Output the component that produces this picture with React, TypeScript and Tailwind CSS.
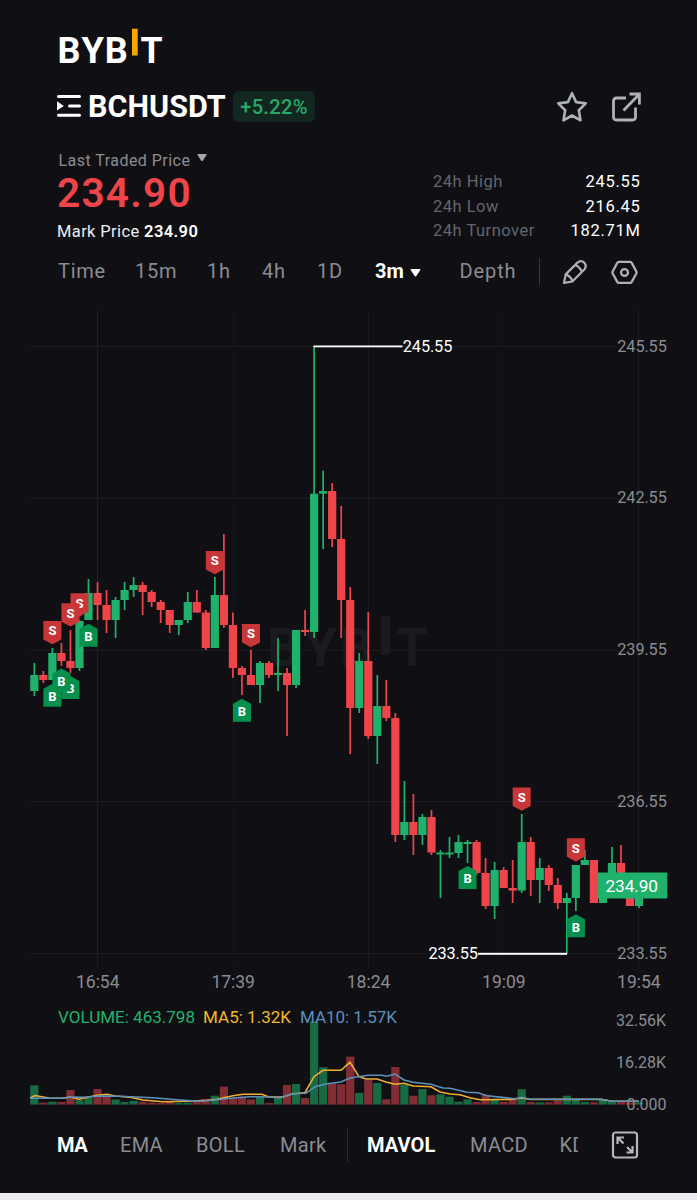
import React from 'react';

type Candle = [high: number, top: number, bottom: number, low: number, up: 0 | 1, volume: number];

// high, body top, body bottom, low, direction, top of the volume bar
const candles: Candle[] = [
  [663, 675, 691, 696, 1, 1085.3],
  [671, 675, 680, 683, 0, 1102.6],
  [648, 653, 680, 680, 1, 1101.7],
  [643, 653, 661, 666, 0, 1102],
  [630, 661, 668, 673, 0, 1090],
  [620, 621, 668, 671, 1, 1100],
  [579, 593, 620, 620, 1, 1098],
  [582, 593, 605, 620, 0, 1089],
  [590, 605, 620, 633, 0, 1097],
  [597, 600, 620, 638, 1, 1099.5],
  [582, 590, 600, 610, 1, 1102],
  [577, 585, 590, 597, 1, 1100.7],
  [582, 585, 592, 615, 0, 1101.7],
  [590, 592, 602, 607, 0, 1102.6],
  [600, 602, 610, 623, 0, 1103],
  [610, 610, 625, 633, 0, 1101.7],
  [620, 620, 625, 635, 1, 1103],
  [592, 602, 620, 623, 1, 1102.6],
  [590, 602, 612.5, 612.5, 0, 1102],
  [610, 612.5, 648, 650, 0, 1099],
  [577, 595, 648, 648, 1, 1095.7],
  [534, 595, 625, 628, 0, 1086.7],
  [612.5, 625, 668, 678, 0, 1098.3],
  [666, 668, 675, 695, 0, 1096.7],
  [650, 675, 685, 685, 0, 1099.5],
  [661, 663, 685, 703, 1, 1096.7],
  [661, 663, 675, 678, 0, 1103],
  [638, 673, 675, 691, 1, 1097.3],
  [668, 673, 685, 736, 0, 1085],
  [630, 630, 685, 688, 1, 1084],
  [610, 630, 632, 636, 0, 1098],
  [346, 493.7, 632, 638, 1, 1021.3],
  [470.7, 491, 493.7, 549, 1, 1067.3],
  [483, 491, 539, 547, 0, 1083.3],
  [506, 539, 600, 638, 0, 1084.3],
  [587, 600, 708, 754, 0, 1056.7],
  [653, 661, 708, 713, 1, 1093],
  [612, 661, 736, 739, 0, 1080],
  [675, 706, 736, 764, 1, 1083],
  [680, 706, 718, 721, 0, 1099.3],
  [713, 718, 835, 842, 0, 1067],
  [781, 822, 835, 840, 1, 1084.7],
  [794, 822, 835, 855, 0, 1095.7],
  [814, 817, 835, 845, 1, 1089],
  [810, 817, 852.5, 855, 0, 1095.3],
  [850, 852.5, 854.5, 898, 1, 1094.3],
  [837, 852.5, 854.5, 858, 1, 1096.7],
  [835, 842, 853, 858, 1, 1101.7],
  [840, 842, 844, 863, 1, 1099.3],
  [840, 842, 873, 875, 0, 1102],
  [858, 873, 906, 909, 0, 1094.7],
  [862, 870, 906, 919, 1, 1099.3],
  [867, 870, 888, 888, 0, 1101.7],
  [860, 888, 890.5, 903, 0, 1099.3],
  [814, 842, 890.5, 893, 1, 1089.3],
  [837, 842, 880, 896, 0, 1102],
  [858, 868, 880, 903, 1, 1102.3],
  [865, 868, 885, 891, 0, 1102.3],
  [878, 885, 903, 909, 0, 1100.3],
  [893, 898, 903, 954, 1, 1095.7],
  [865, 865, 898, 911, 1, 1099.7],
  [850, 860, 865, 865, 1, 1102],
  [860, 860, 903, 903, 0, 1102.3],
  [880, 885, 903, 903, 1, 1099.3],
  [847, 863, 885, 890, 1, 1102],
  [845, 863, 885, 890, 0, 1101],
  [880, 885, 906, 906, 0, 1102.6],
  [885, 898, 906, 908, 1, 1102.3],
];

// candle index, y of the flat edge
const sells = [[60, 838.3], [54, 787.4], [24, 624], [20, 551], [5, 593.2], [4, 603.2], [2, 621]];
const buys = [[60, 937.3], [48, 889], [23, 721.7], [6, 646.7], [4, 699], [3, 691.5], [2, 706.7]];

const priceAxis: [string, number][] = [
  ['245.55', 346.5],
  ['242.55', 498.3],
  ['239.55', 650.2],
  ['236.55', 801.7],
  ['233.55', 953.7],
];
const timeAxis: [string, number, string][] = [
  ['16:54', 97.5, '#1f2025'],
  ['17:39', 232.9, '#15161a'],
  ['18:24', 368.3, '#1f2025'],
  ['19:09', 503.6, '#15161a'],
  ['19:54', 638.6, '#1f2025'],
];

const ma5 =
  '30,1098 35,1095.5 50,1098.3 62,1098.3 70,1097 79,1099.3 97,1095.3 107,1094.3 115,1096 130,1097.3 143,1100 163,1101.7 187,1101.3 207,1100.3 217,1099.3 233,1095.7 243,1094.3 262,1094.3 268,1096.7 283,1097 293,1093.7 305,1092.7 314,1076.7 323,1070.3 341,1070.3 350,1062.3 359,1076.7 366,1079 377,1079 386,1082 395,1084.3 404,1083.3 413,1086 431,1086.7 440,1092 450,1094 460,1094.7 470,1097.7 480,1099.7 513,1099.3 522,1098 530,1099.4 601,1099.4 612,1101.3 639,1101.3';
const ma10 =
  '30,1098.3 63,1098.3 73,1097 83,1097.3 100,1096 120,1096.3 153,1097.7 180,1100 200,1101.3 217,1099.7 230,1098.3 250,1096.7 267,1097 280,1097.7 293,1093.7 306,1093.3 315,1086.7 327,1083.7 341,1082 350,1078 368,1075.3 382,1075.3 387,1076.3 395,1074 404,1080 413,1082.3 431,1084.3 443,1088 450,1088.3 467,1092.3 478,1092.7 487,1095.7 515,1098.7 522,1097.3 530,1099.3 601,1099.3 612,1101.3 639,1101.3';

const cx = (i: number) => 34.35 + i * 9.025;

function Logo() {
  return (
    <svg width="118" height="56" viewBox="52 22 118 56" className="-ml-[5px] block font-['Roboto'] font-bold">
      <g fill="#fff" fontSize="37.5">
        <text x="57.5" y="63.3" textLength="23" lengthAdjust="spacingAndGlyphs">B</text>
        <text x="81.5" y="63.3" textLength="22.5" lengthAdjust="spacingAndGlyphs">Y</text>
        <text x="104.8" y="63.3" textLength="23" lengthAdjust="spacingAndGlyphs">B</text>
        <text x="140.5" y="63.3" textLength="22" lengthAdjust="spacingAndGlyphs">T</text>
      </g>
      <rect x="132" y="28.7" width="5.7" height="26.8" fill="#f7a600" />
    </svg>
  );
}

function Chart() {
  return (
    <svg width="697" height="820" viewBox="0 300 697 820" className="block font-['Roboto']">
      <g strokeWidth="1">
        {priceAxis.map(([label, y]) => (
          <line key={label} x1="29" x2="617" y1={y} y2={y} stroke="#1d1e23" />
        ))}
        {timeAxis.map(([label, x, color]) => (
          <line key={label} x1={x} x2={x} y1="310" y2="967" stroke={color} />
        ))}
      </g>

      {/* Watermark */}
      <g fill="#1a1b1f" fontSize="53" fontWeight="700">
        <text x="267" y="666" textLength="33" lengthAdjust="spacingAndGlyphs">B</text>
        <text x="304" y="666" textLength="33" lengthAdjust="spacingAndGlyphs">Y</text>
        <text x="340" y="666" textLength="33" lengthAdjust="spacingAndGlyphs">B</text>
        <text x="396" y="666" textLength="32" lengthAdjust="spacingAndGlyphs">T</text>
        <rect x="381" y="616.5" width="9" height="38" />
      </g>

      {/* Volume */}
      {candles.map(([, , , , up, volume], i) => (
        <rect
          key={i}
          x={cx(i) - 4.1}
          y={volume}
          width="8.2"
          height={1104.6 - volume}
          fill={up ? '#186a43' : '#822d34'}
        />
      ))}
      <g fontSize="17">
        <text x="58" y="1022.7" fill="#20b26c" textLength="137">VOLUME: 463.798</text>
        <text x="203" y="1022.7" fill="#f5b72c" textLength="88">MA5: 1.32K</text>
        <text x="300" y="1022.7" fill="#5b8fbe" textLength="97">MA10: 1.57K</text>
      </g>
      <polyline points={ma5} fill="none" stroke="#f0ae33" strokeWidth="1.6" />
      <polyline points={ma10} fill="none" stroke="#5d90bb" strokeWidth="1.6" />

      {/* Candles */}
      {candles.map(([high, top, bottom, low, up], i) => (
        <g key={i} fill={up ? '#20b26c' : '#ef454a'}>
          <rect x={cx(i) - 0.85} y={high} width="1.7" height={low - high} />
          <rect x={cx(i) - 4.1} y={top} width="8.2" height={bottom - top} />
        </g>
      ))}

      {/* High and low callouts */}
      <g fill="#fff" fontSize="16.3">
        <rect x="313.5" y="345.5" width="89" height="1.8" />
        <text x="402.8" y="351.6" textLength="49.5">245.55</text>
        <rect x="478" y="952.8" width="89" height="2" />
        <text x="428.5" y="958.6" textLength="49.5">233.55</text>
      </g>

      {/* Trade markers */}
      <g fontSize="13" fontWeight="700" textAnchor="middle">
        {buys.map(([i, y]) => (
          <g key={i}>
            <path d={`M${cx(i) - 9} ${y}v-18l9-5 9 5v18z`} fill="#05904e" />
            <text x={cx(i)} y={y - 5.7} fill="#fff">B</text>
          </g>
        ))}
        {sells.map(([i, y]) => (
          <g key={i}>
            <path d={`M${cx(i) - 9} ${y}v18.5l9 4.8 9-4.8v-18.5z`} fill="#c83638" />
            <text x={cx(i)} y={y + 14.3} fill="#fff">S</text>
          </g>
        ))}
      </g>

      {/* Axes */}
      <g fill="#8a8c92">
        {priceAxis.map(([label, y]) => (
          <text key={label} x="617.3" y={y + 5} fontSize="16.3" textLength="49.5">{label}</text>
        ))}
        {timeAxis.map(([label, x]) => (
          <text key={label} x={x - 21.5} y="987.7" fontSize="17.5" textLength="43.5">{label}</text>
        ))}
        <text x="616" y="1026" fontSize="16" textLength="50">32.56K</text>
        <text x="616" y="1067.7" fontSize="16" textLength="50">16.28K</text>
        <text x="626.5" y="1109.5" fontSize="16" textLength="40">0.000</text>
      </g>

      {/* Current price */}
      <rect x="598" y="872.5" width="69.3" height="26" fill="#20b26c" />
      <text x="605.5" y="891.7" fill="#fff" fontSize="17.3" textLength="52.5">234.90</text>
    </svg>
  );
}

function Stat({ label, value }: { label: string; value: string }) {
  return (
    <div className="flex h-[24.6px] items-center justify-between">
      <span className="tracking-[0.5px] text-[#63656c]">{label}</span>
      <span className="-mr-[0.5px] tracking-[0.7px] text-white">{value}</span>
    </div>
  );
}

function Header() {
  return (
    <header className="px-[57px]">
      <div className="h-[66px] pt-[22px]">
        <Logo />
      </div>

      <div className="mt-[22px] flex h-9 items-center">
        <svg width="25" height="24" viewBox="0 0 25 24" className="shrink-0">
          <path d="M1.5 2.5H22.5M12.5 11.9H22.5M1.5 21.2H22.5" stroke="#fff" strokeWidth="3" strokeLinecap="round" />
          <path d="M0 7.3L6.8 11.9 0 16.5z" fill="#fff" />
        </svg>
        <h1 className="ml-[6px] w-[145px] whitespace-nowrap pt-[2px] text-[30.5px] font-bold leading-9 tracking-[0.02px] text-white">
          BCHUSDT
        </h1>
        <span className="flex h-[31px] w-[82px] items-center justify-center rounded-[6px] bg-[#12271f] pt-[2px] text-[20px] font-medium leading-7 tracking-[0.35px] text-[#2aa868]">
          +5.22%
        </span>
        <div className="ml-auto flex items-center gap-[21px] pt-[2px] text-[#adb1b8]">
          <svg width="34" height="34" viewBox="0 0 34 34" fill="none" stroke="currentColor" strokeWidth="2.6" strokeLinejoin="round" className="-ml-px mr-px">
            <path d="M17 3.2L21.1 12.1 30.8 13.4 23.8 20.2 25.5 30.3 17 25.5 8.5 30.3 10.2 20.2 3.2 13.4 12.9 12.1Z" />
          </svg>
          <svg width="30" height="30" viewBox="0 0 30 30" fill="none" stroke="currentColor" strokeWidth="2.8" className="-mr-px">
            <path d="M15 6H5.5Q2.5 6 2.5 9V25Q2.5 28 5.5 28H21.5Q24.5 28 24.5 25V15.5" />
            <path d="M12.5 18.5L28 2.5M18.5 2H28.4V12.5" />
          </svg>
        </div>
      </div>

      <div className="mt-[23px] flex justify-between">
        <div>
          <div className="flex h-[25px] items-center text-base tracking-[0.46px] text-[#8a8c92]">
            <span className="pl-[1.5px] pt-[2px]">Last Traded Price</span>
            <svg width="10" height="8" viewBox="0 0 10 8" className="-mt-[4px] ml-[7px]">
              <path d="M1.2 0H8.8Q10 0 9.3 1.2L6 6.5Q5 7.6 4 6.5L.7 1.2Q0 0 1.2 0Z" fill="#a5a7ad" />
            </svg>
          </div>
          <div className="h-[42px] text-[40.5px] font-semibold leading-[42px] tracking-[1.3px] text-[#ef454a]">234.90</div>
          <div className="pt-[6px] text-[16.5px] leading-6 tracking-[0.38px] text-[#eceef2]">
            Mark Price <span className="font-semibold text-white">234.90</span>
          </div>
        </div>
        <div className="w-[207px] pt-[23px] text-[16.5px] leading-6">
          <Stat label="24h High" value="245.55" />
          <Stat label="24h Low" value="216.45" />
          <Stat label="24h Turnover" value="182.71M" />
        </div>
      </div>
    </header>
  );
}

function IntervalTabs() {
  return (
    <nav className="flex h-[54px] items-center whitespace-nowrap pl-[58px] text-[20px] tracking-[0.7px] text-[#8a8c92]">
      <span className="w-[77px]">Time</span>
      <span className="w-[72px]">15m</span>
      <span className="w-[55px]">1h</span>
      <span className="w-[55px]">4h</span>
      <span className="w-[58px]">1D</span>
      <span className="flex w-[84.5px] items-center font-bold tracking-[0px] text-white">
        3m
        <svg width="11" height="8" viewBox="0 0 11 8" className="ml-[6px] mt-[4px]">
          <path d="M1.3 0H9.7Q11 0 10.2 1.2L6.5 6.8Q5.5 8 4.5 6.8L.8 1.2Q0 0 1.3 0Z" fill="#fff" />
        </svg>
      </span>
      <span className="w-[79.5px] tracking-[0.9px]">Depth</span>
      <span className="h-[27px] w-px bg-[#34363c]" />
      <svg width="26" height="26" viewBox="0 0 26 26" fill="none" stroke="#adb1b8" strokeWidth="2.2" strokeLinejoin="round" className="ml-[22px] mt-[2px]">
        <path d="M2 24L3.7 15.4 15.5 3.6Q19 .8 22.3 3.7 25.2 7 22.3 10.5L10.6 22.3Z" />
        <path d="M3.7 15.4Q8.5 17 10.6 22.3M13.2 6Q18 8 19.9 12.8" />
      </svg>
      <svg width="27" height="25" viewBox="0 0 28 26" fill="none" stroke="#adb1b8" strokeWidth="2.4" strokeLinejoin="round" className="ml-[23px] mt-[2px]">
        <path d="M8 2H20Q21 2 21.5 3L26.3 12Q26.8 13 26.3 14L21.5 22.8Q21 23.8 20 23.8H8Q7 23.8 6.5 22.8L1.7 14Q1.2 13 1.7 12L6.5 3Q7 2 8 2Z" />
        <circle cx="14" cy="13" r="3.6" />
      </svg>
    </nav>
  );
}

function IndicatorTabs() {
  return (
    <nav className="flex h-[49px] items-center whitespace-nowrap pl-[57px] text-[20px] tracking-[0.3px] text-[#8a8c92]">
      <span className="w-[63px] font-bold tracking-[-0.4px] text-white">MA</span>
      <span className="w-[76px]">EMA</span>
      <span className="w-[84px]">BOLL</span>
      <span className="w-[67px]">Mark</span>
      <span className="h-[34px] w-px bg-[#2b2d33]" />
      <span className="ml-[19px] w-[103px] font-bold tracking-[0.1px] text-white">MAVOL</span>
      <span className="w-[89.5px]">MACD</span>
      <span className="w-[18px] overflow-hidden">KDJ</span>
      <svg width="28" height="28" viewBox="0 0 28 28" fill="none" stroke="#b4b7bd" strokeWidth="2.2" className="ml-[33px]">
        <rect x="2" y="1.5" width="24" height="25" rx="2.5" />
        <path d="M6.5 13V6.5H13M6.5 6.5L12.5 12.5M15.5 21.5H21.5V15M21.5 21.5L16 16" />
      </svg>
    </nav>
  );
}

export default function App() {
  return (
    <div className="flex h-[1200px] w-[697px] flex-col overflow-hidden bg-[#101014] font-['Roboto',sans-serif]">
      <Header />
      <IntervalTabs />
      <main className="mt-[2px] h-[820px] shrink-0">
        <Chart />
      </main>
      <IndicatorTabs />
      <div className="mt-auto h-[7px] shrink-0 bg-[#ecebf0]" />
    </div>
  );
}
